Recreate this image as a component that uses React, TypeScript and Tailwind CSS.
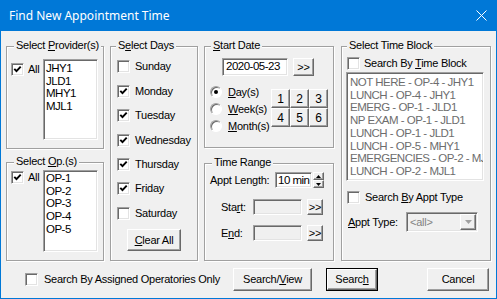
import React from "react"

const sunken =
  "border border-t-[#a0a0a0] border-l-[#a0a0a0] border-r-white border-b-white shadow-[inset_1px_1px_0_#696969,inset_-1px_-1px_0_#e3e3e3]"
const raised =
  "bg-[#f0f0f0] border border-t-white border-l-white border-r-[#696969] border-b-[#696969] shadow-[inset_-1px_-1px_0_#a0a0a0]"
const listFont = "text-[11.5px] tracking-[-0.5px] whitespace-nowrap"

function Check({ checked = false }: { checked?: boolean }) {
  return (
    <div className={`w-[13px] h-[13px] shrink-0 bg-white flex items-center justify-center ${sunken}`}>
      {checked && (
        <svg width="9" height="9" viewBox="0 0 9 9">
          <path d="M1.3 3.8 L3.5 6.2 L7.7 1.6" fill="none" stroke="#000" strokeWidth="1.9" />
        </svg>
      )}
    </div>
  )
}

function Radio({ checked = false }: { checked?: boolean }) {
  return (
    <div className="w-[12px] h-[12px] shrink-0 rounded-full bg-white border border-t-[#a0a0a0] border-l-[#a0a0a0] border-r-white border-b-white shadow-[inset_1px_1px_0_#696969] flex items-center justify-center">
      {checked && <div className="w-[4px] h-[4px] rounded-full bg-black" />}
    </div>
  )
}

function GroupBox({ label, className, labelClass, children }: { label: React.ReactNode, className: string, labelClass: string, children?: React.ReactNode }) {
  return (
    <div className={`relative border border-[#a0a0a0] shadow-[inset_1px_1px_0_#fff,1px_1px_0_#fff] ${className}`}>
      <span className={`absolute top-[-8px] px-[2px] bg-[#f0f0f0] leading-[13px] whitespace-nowrap ${labelClass}`}>{label}</span>
      {children}
    </div>
  )
}

function DayRow({ day, checked }: { day: React.ReactNode, checked?: boolean }) {
  return (
    <div className="h-[24.4px] flex items-center">
      <Check checked={checked} />
      <span className="ml-[5px] leading-[13px]">{day}</span>
    </div>
  )
}

function NumBtn({ n }: { n: string }) {
  return <div className={`w-[19px] h-[19px] flex items-center justify-center text-[12px] ${raised}`}>{n}</div>
}

function ArrowBtn({ h }: { h: string }) {
  return <div className={`flex items-center justify-center text-[11px] ${raised} ${h}`}>&gt;&gt;</div>
}

const timeBlocks = [
  "NOT HERE - OP-4 - JHY1",
  "LUNCH - OP-4 - JHY1",
  "EMERG - OP-1 - JLD1",
  "NP EXAM - OP-1 - JLD1",
  "LUNCH - OP-1 - JLD1",
  "LUNCH - OP-5 - MHY1",
  "EMERGENCIES - OP-2 - MJL1",
  "LUNCH - OP-2 - MJL1",
]

export default function App() {
  return (
    <div className="w-[497px] h-[299px] font-['Liberation_Sans',Arial,sans-serif] text-[11px] tracking-[-0.25px] text-black select-none">
      {/* title bar */}
      <div className="h-[31px] bg-[#0078d7] flex items-center text-white">
        <span className="pl-[9px] text-[12px] tracking-normal font-['Noto_Sans',sans-serif]">Find New Appointment Time</span>
        <svg className="ml-auto mr-[10px]" width="11" height="11" viewBox="0 0 11 11">
          <path d="M0.5 0.5 L10.5 10.5 M10.5 0.5 L0.5 10.5" stroke="#fff" strokeWidth="1" />
        </svg>
      </div>

      <div className="h-[268px] bg-[#f0f0f0] border-x border-b border-[#0078d7] flex flex-col">
        <div className="flex pt-[15px] pl-[5px]">
          {/* column 1 */}
          <div className="w-[98px] flex flex-col gap-[13px]">
            <GroupBox className="h-[103px]" labelClass="left-[7px]" label={<>Select <u>P</u>rovider(s)</>}>
              <div className="flex items-start pt-[12px] pl-[4px]">
                <div className="w-[32px] flex items-center mt-[4px]">
                  <Check checked />
                  <span className="ml-[4px] leading-[13px]">All</span>
                </div>
                <div className={`w-[55px] h-[81px] bg-white pl-[2px] pt-[2px] leading-[12.7px] ${listFont} ${sunken}`}>
                  {["JHY1", "JLD1", "MHY1", "MJL1"].map((p) => <div key={p}>{p}</div>)}
                </div>
              </div>
            </GroupBox>
            <GroupBox className="h-[99px]" labelClass="left-[7px]" label={<>Select <u>O</u>p.(s)</>}>
              <div className="flex items-start pt-[7px] pl-[4px]">
                <div className="w-[32px] flex items-center mt-[1px]">
                  <Check checked />
                  <span className="ml-[4px] leading-[13px]">All</span>
                </div>
                <div className={`w-[55px] h-[82px] bg-white pl-[2px] pt-[1px] leading-[12.7px] ${listFont} ${sunken}`}>
                  {["OP-1", "OP-2", "OP-3", "OP-4", "OP-5"].map((p) => <div key={p}>{p}</div>)}
                </div>
              </div>
            </GroupBox>
          </div>

          {/* column 2 */}
          <div className="w-[88px] ml-[6px]">
            <GroupBox className="h-[215px] pt-[7.8px] pl-[6px]" labelClass="left-[5px]" label={<>S<u>e</u>lect Days</>}>
              <DayRow day="Sunday" />
              <DayRow day="Monday" checked />
              <DayRow day="Tuesday" checked />
              <DayRow day="Wednesday" checked />
              <DayRow day="Thursday" checked />
              <DayRow day="Friday" checked />
              <DayRow day="Saturday" />
              <div className={`w-[54px] h-[22px] ml-[10px] mt-[3.4px] flex items-center justify-center ${raised}`}>
                <span><u>C</u>lear All</span>
              </div>
            </GroupBox>
          </div>

          {/* column 3 */}
          <div className="w-[130px] ml-[6px] flex flex-col gap-[15px]">
            <GroupBox className="h-[102px]" labelClass="left-[6px]" label={<><u>S</u>tart Date</>}>
              <div className="flex pt-[11px] pl-[17px]">
                <div className={`w-[66px] h-[18px] bg-white flex items-center pl-[3px] ${listFont} ${sunken}`}>2020-05-23</div>
                <ArrowBtn h="w-[21px] h-[18px] ml-[5px]" />
              </div>
              <div className="flex pl-[5px] mt-[7.5px]">
                <div className="w-[61px] flex flex-col">
                  <div className="h-[17px] flex items-center"><Radio checked /><span className="ml-[6px]"><u>D</u>ay(s)</span></div>
                  <div className="h-[17px] flex items-center"><Radio /><span className="ml-[6px]"><u>W</u>eek(s)</span></div>
                  <div className="h-[17px] flex items-center"><Radio /><span className="ml-[6px]"><u>M</u>onth(s)</span></div>
                </div>
                <div className="grid grid-cols-3 mt-[5.5px] h-fit">
                  {["1", "2", "3", "4", "5", "6"].map((n) => <NumBtn key={n} n={n} />)}
                </div>
              </div>
            </GroupBox>
            <GroupBox className="h-[98px]" labelClass="left-[7px]" label="Time Range">
              <div className="flex items-center pt-[8px] pl-[5px]">
                <span className="w-[65px]">Appt Length:</span>
                <div className={`w-[37px] h-[16px] bg-white flex items-center pl-[2px] ${listFont} ${sunken}`}>10 min</div>
                <div className="flex flex-col ml-[1px]">
                  <div className={`w-[11px] h-[8px] flex items-center justify-center ${raised}`}>
                    <svg width="5" height="3" viewBox="0 0 5 3"><path d="M2.5 0 L5 3 L0 3 Z" fill="#000" /></svg>
                  </div>
                  <div className={`w-[11px] h-[8px] flex items-center justify-center ${raised}`}>
                    <svg width="5" height="3" viewBox="0 0 5 3"><path d="M0 0 L5 0 L2.5 3 Z" fill="#000" /></svg>
                  </div>
                </div>
              </div>
              <div className="flex items-center mt-[10px] pl-[16px]">
                <span className="w-[32px]">Sta<u>r</u>t:</span>
                <div className={`w-[49px] h-[16px] bg-[#f0f0f0] ${sunken}`} />
                <ArrowBtn h="w-[16px] h-[16px] ml-[5px]" />
              </div>
              <div className="flex items-center mt-[10px] pl-[16px]">
                <span className="w-[32px]">E<u>n</u>d:</span>
                <div className={`w-[49px] h-[16px] bg-[#f0f0f0] ${sunken}`} />
                <ArrowBtn h="w-[16px] h-[16px] ml-[5px]" />
              </div>
            </GroupBox>
          </div>

          {/* column 4 */}
          <div className="w-[150px] ml-[7px]">
            <GroupBox className="h-[215px] pt-[10px]" labelClass="left-[5px]" label="Select Time Block">
              <div className="h-[13px] flex items-center pl-[5px]">
                <Check />
                <span className="ml-[4px]">Search By <u>T</u>ime Block</span>
              </div>
              <div className={`ml-[4px] mt-[2px] w-[138px] h-[109px] bg-white pl-[3px] pt-[3px] overflow-hidden leading-[12.7px] text-[#6d6d6d] ${listFont} ${sunken}`}>
                {timeBlocks.map((t) => <div key={t}>{t}</div>)}
              </div>
              <div className="h-[13px] mt-[9.5px] flex items-center pl-[5px]">
                <Check />
                <span className="ml-[5px]">Search <u>B</u>y Appt Type</span>
              </div>
              <div className="flex items-center mt-[8.5px] pl-[6px]">
                <span className="w-[58px]"><u>A</u>ppt Type:</span>
                <div className={`w-[72px] h-[20px] bg-[#f0f0f0] flex items-center pl-[3px] pr-[1px] text-[#838383] ${sunken}`}>
                  <span>&lt;all&gt;</span>
                  <div className={`ml-auto w-[16px] h-[16px] flex items-center justify-center ${raised}`}>
                    <svg width="7" height="4" viewBox="0 0 7 4"><path d="M0 0 L7 0 L3.5 4 Z" fill="#a0a0a0" /></svg>
                  </div>
                </div>
              </div>
            </GroupBox>
          </div>
        </div>

        {/* bottom row */}
        <div className="flex items-center mt-[7px] h-[23px]">
          <div className="w-[232px] flex items-center pl-[24px]">
            <Check />
            <span className="ml-[6px] whitespace-nowrap">Search By Assigned Operatories Only</span>
          </div>
          <div className={`w-[79px] h-[23px] flex items-center justify-center ${raised}`}>
            <span>Search/<u>V</u>iew</span>
          </div>
          <div className="w-[52px] h-[23px] ml-[14px] border border-black">
            <div className={`w-full h-full flex items-center justify-center ${raised}`}>
              <span>Searc<u>h</u></span>
            </div>
          </div>
          <div className={`w-[62px] h-[23px] ml-[49px] flex items-center justify-center ${raised}`}>
            <span>Cancel</span>
          </div>
        </div>
      </div>
    </div>
  )
}
